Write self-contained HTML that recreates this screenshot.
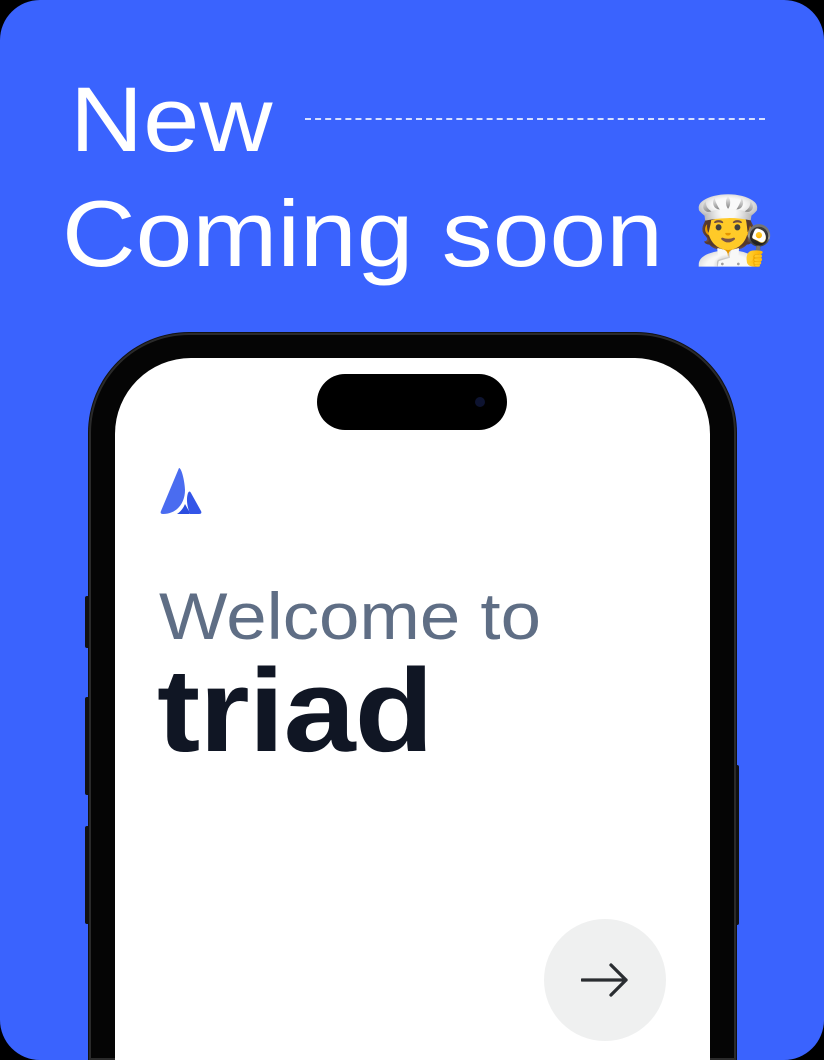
<!DOCTYPE html>
<html><head><style>
html,body{margin:0;padding:0;background:#000;width:824px;height:1060px;overflow:hidden;}
.wrap{position:relative;width:824px;height:1060px;overflow:hidden;background:#000;}
.card{position:absolute;left:0;top:0;width:824px;height:1060px;background:#3a63fe;border-radius:40px;overflow:hidden;}
.t{position:absolute;color:#fff;font-family:"Liberation Sans",sans-serif;white-space:nowrap;transform-origin:0 0;}
.phone{position:absolute;left:89px;top:333px;width:647px;height:727px;background:#050505;border-radius:100px 100px 0 0;box-shadow:0 0 0 2px #2a2a2a inset, 0 0 0 1px #111;overflow:hidden;}
.screen{position:absolute;left:26px;top:25px;width:595px;height:702px;background:#fff;border-radius:76px 76px 0 0;}
.island{position:absolute;left:202px;top:16px;width:190px;height:56px;background:#000;border-radius:28px;}
.btn{position:absolute;background:#111;border-radius:2px;}
</style></head><body><div class="wrap"><div class="card">
<div class="t" style="left:70px;top:68px;font-size:92px;font-weight:300;transform:scaleX(1.1);">New</div>
<div style="position:absolute;left:305px;top:118px;width:460px;border-top:2px dashed rgba(255,255,255,0.8);"></div>
<div class="t" style="left:62px;top:180px;font-size:94px;transform:scaleX(1.085);">Coming soon</div>
<div class="t" style="left:693px;top:193px;font-size:66px;font-family:'Noto Color Emoji',sans-serif;">🧑‍🍳</div>
<div class="btn" style="left:85px;top:596px;width:5px;height:52px;"></div>
<div class="btn" style="left:85px;top:697px;width:5px;height:98px;"></div>
<div class="btn" style="left:85px;top:826px;width:5px;height:98px;"></div>
<div class="btn" style="left:734px;top:765px;width:5px;height:160px;"></div>
<div class="phone"><div class="screen">
<div class="island"><div style="position:absolute;right:22px;top:23px;width:10px;height:10px;border-radius:50%;background:#0d1330;"></div></div>
<svg style="position:absolute;left:44px;top:108px" width="56" height="56" viewBox="0 0 56 56">
<path d="M20 2 C23 2 26 18 26 24 C26 38 17 48 4 48 C2 48 1 47 2 45 Z" fill="#4a6cf0"/>
<path d="M29 27 C30 25 31 25 32 27 L42 45 C43 47 42 48 40 48 L31 48 C28 40 27 33 29 27Z" fill="#3355e8"/>
<path d="M26 38 L31 47 C31 48 30 48 29 48 L18 48 C21 46 24 43 26 38Z" fill="#2b4de0"/>
</svg>
<div style="position:absolute;left:44px;top:220px;font-family:'Liberation Sans',sans-serif;font-size:66px;color:#5f6e85;white-space:nowrap;transform:scaleX(1.1);transform-origin:0 0;">Welcome to</div>
<div style="position:absolute;left:42px;top:285px;font-family:'Liberation Sans',sans-serif;font-size:118px;font-weight:bold;color:#101624;white-space:nowrap;letter-spacing:-1px;transform:scaleX(1.1);transform-origin:0 0;">triad</div>
<div style="position:absolute;left:429px;top:561px;width:122px;height:122px;border-radius:50%;background:#eff0f0;">
<svg style="position:absolute;left:37px;top:41px" width="48" height="40" viewBox="0 0 48 40"><path d="M1 20 H45 M30 5 L45 20 L30 35" fill="none" stroke="#2a2d31" stroke-width="3.3" stroke-linecap="round" stroke-linejoin="round"/></svg>
</div>
</div></div>
</div></div></body></html>
